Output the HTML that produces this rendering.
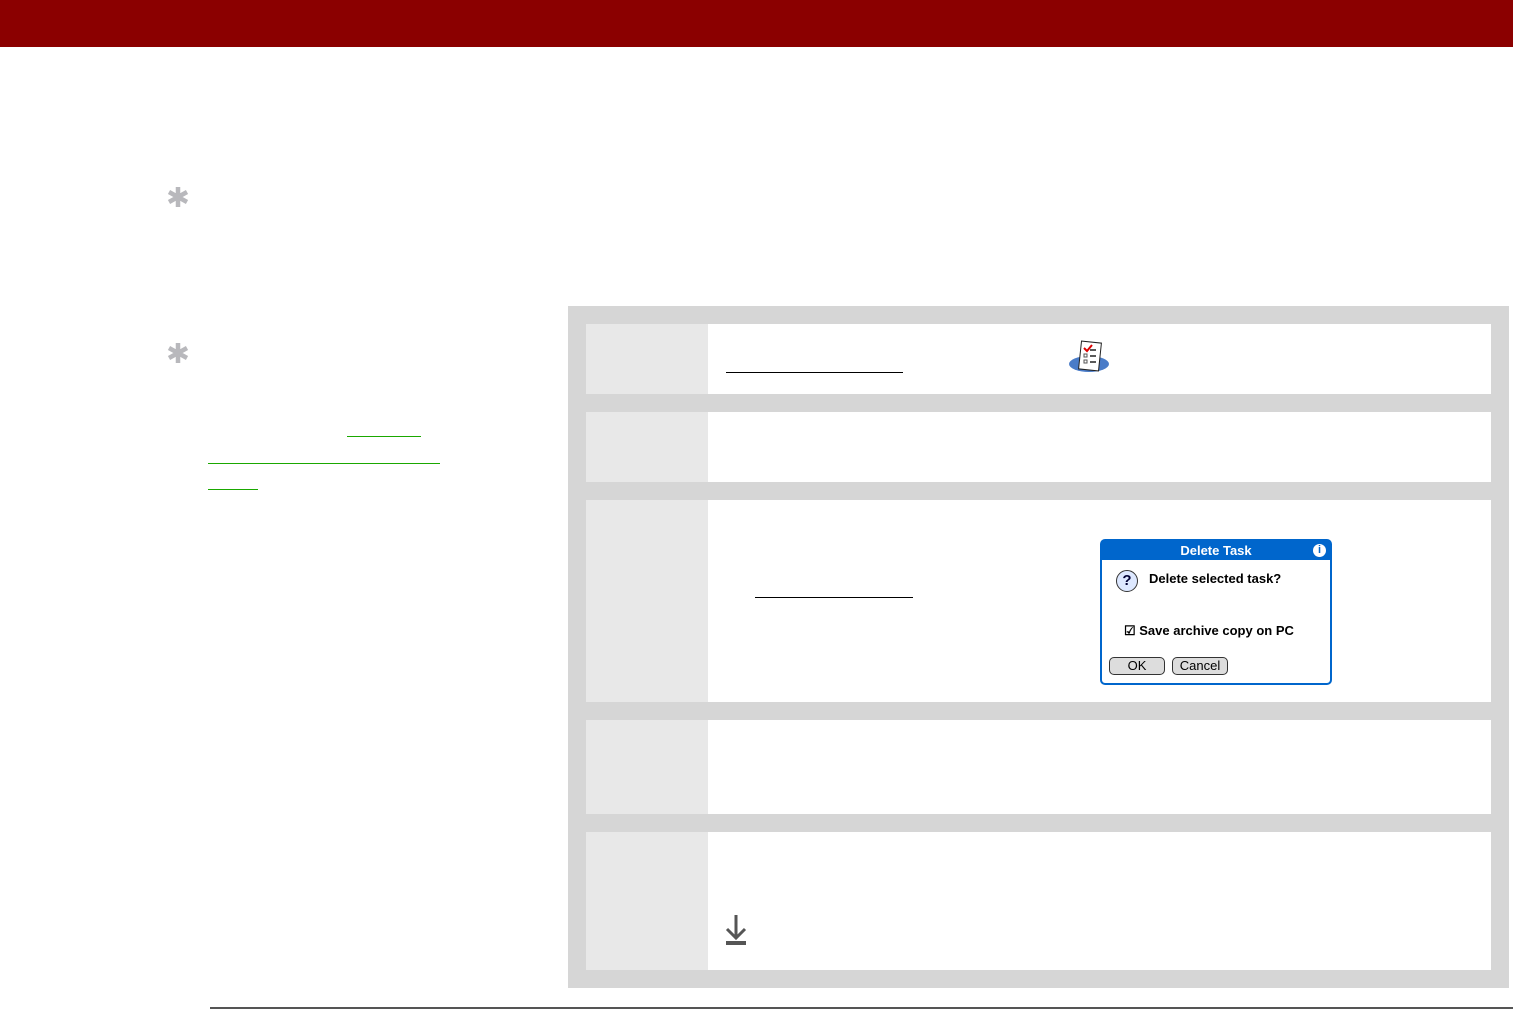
<!DOCTYPE html>
<html><head><style>
body{margin:0;width:1513px;height:1010px;background:#fff;position:relative;overflow:hidden;font-family:"Liberation Sans",sans-serif}
.a{position:absolute}
.l{position:absolute;left:586px;width:122px;background:#e8e8e8}
.r{position:absolute;left:708px;width:783px;background:#fff}
</style></head><body>
<div class="a" style="left:0;top:0;width:1513px;height:47px;background:#8b0000"></div>
<svg class="a" style="left:167px;top:186px" width="22" height="22"><g stroke="#b8b8bc" stroke-width="4.5"><path d="M11 1v20M2 6l18 10M2 16l18-10"/></g></svg>
<svg class="a" style="left:167px;top:342px" width="22" height="22"><g stroke="#b8b8bc" stroke-width="4.5"><path d="M11 1v20M2 6l18 10M2 16l18-10"/></g></svg>
<div class="a" style="left:347px;top:436px;width:74px;height:1px;background:#1aa800"></div>
<div class="a" style="left:208px;top:463px;width:232px;height:1px;background:#1aa800"></div>
<div class="a" style="left:208px;top:489px;width:50px;height:1px;background:#1aa800"></div>
<div class="a" style="left:568px;top:306px;width:941px;height:682px;background:#d6d6d6"></div>
<div class="l" style="top:324px;height:70px"></div><div class="r" style="top:324px;height:70px"></div>
<div class="l" style="top:412px;height:70px"></div><div class="r" style="top:412px;height:70px"></div>
<div class="l" style="top:500px;height:202px"></div><div class="r" style="top:500px;height:202px"></div>
<div class="l" style="top:720px;height:94px"></div><div class="r" style="top:720px;height:94px"></div>
<div class="l" style="top:832px;height:138px"></div><div class="r" style="top:832px;height:138px"></div>
<div class="a" style="left:726px;top:372px;width:177px;height:1px;background:#000"></div>
<div class="a" style="left:755px;top:597px;width:158px;height:1px;background:#000"></div>
<svg class="a" style="left:1068px;top:340px" width="44" height="34">
<ellipse cx="21" cy="24" rx="20" ry="8" fill="#4a7cc8"/>
<rect x="12" y="2" width="20" height="28" fill="#fff" stroke="#222" transform="rotate(6 22 16)"/>
<path d="M16 8l3 3 5-6" stroke="#d00" stroke-width="2" fill="none"/>
<rect x="16" y="14" width="3" height="3" fill="none" stroke="#555"/><rect x="16" y="20" width="3" height="3" fill="none" stroke="#555"/>
<path d="M22 10h6M22 16h6M22 22h6" stroke="#222" stroke-width="1.5"/>
</svg>
<div class="a" style="left:1100px;top:539px;width:228px;height:142px;border:2px solid #0066cc;border-radius:5px;background:#fff;font-weight:bold;font-size:13px">
<div style="background:#0066cc;color:#fff;height:19px;line-height:19px;text-align:center">Delete Task</div>
<div class="a" style="right:4px;top:3px;width:13px;height:13px;border-radius:50%;background:#fff;color:#0066cc;font-size:11px;line-height:13px;text-align:center">i</div>
<div class="a" style="left:14px;top:29px;width:20px;height:20px;border-radius:50%;border:1px solid #333;background:#dde8ff;color:#003;text-align:center;line-height:20px;font-size:15px">?</div>
<div class="a" style="left:47px;top:30px">Delete selected task?</div>
<div class="a" style="left:22px;top:82px">☑ Save archive copy on PC</div>
<div class="a" style="left:7px;top:116px;width:54px;height:16px;border:1px solid #333;border-radius:5px;background:#ddd;font-weight:normal;text-align:center;line-height:16px">OK</div>
<div class="a" style="left:70px;top:116px;width:54px;height:16px;border:1px solid #333;border-radius:5px;background:#ddd;font-weight:normal;text-align:center;line-height:16px">Cancel</div>
</div>
<svg class="a" style="left:724px;top:914px" width="24" height="32"><path d="M12 1v23M3 15l9 9 9-9" stroke="#555" stroke-width="3" fill="none"/><rect x="2" y="27" width="20" height="4" fill="#555"/></svg>
<div class="a" style="left:210px;top:1007px;width:1303px;height:2px;background:#555"></div>
</body></html>
